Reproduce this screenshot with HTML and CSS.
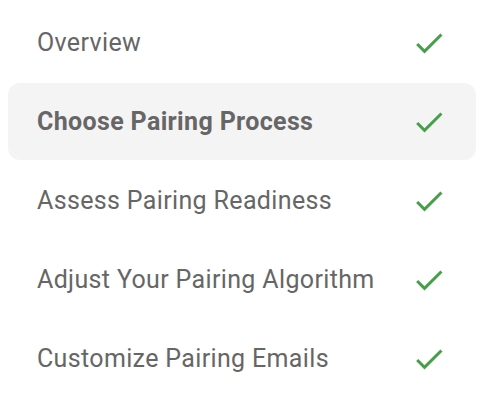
FILE: index.html
```html
<!DOCTYPE html>
<html lang="en">
<head>
  <meta charset="UTF-8">
  <meta name="viewport" content="width=device-width, initial-scale=1.0">
  <title>Pairing Setup</title>
  <link rel="stylesheet" href="styles.css">
</head>
<body>
  <!-- Setup steps -->
  <ul class="steps">
    <li class="step">
      <span class="step-label">Overview</span>
      <svg class="check" viewBox="0 0 24 24"><path d="M9 16.17L4.83 12l-1.42 1.41L9 19 21 7l-1.41-1.41z"/></svg>
    </li>
    <li class="step active">
      <span class="step-label">Choose Pairing Process</span>
      <svg class="check" viewBox="0 0 24 24"><path d="M9 16.17L4.83 12l-1.42 1.41L9 19 21 7l-1.41-1.41z"/></svg>
    </li>
    <li class="step">
      <span class="step-label">Assess Pairing Readiness</span>
      <svg class="check" viewBox="0 0 24 24"><path d="M9 16.17L4.83 12l-1.42 1.41L9 19 21 7l-1.41-1.41z"/></svg>
    </li>
    <li class="step">
      <span class="step-label">Adjust Your Pairing Algorithm</span>
      <svg class="check" viewBox="0 0 24 24"><path d="M9 16.17L4.83 12l-1.42 1.41L9 19 21 7l-1.41-1.41z"/></svg>
    </li>
    <li class="step">
      <span class="step-label">Customize Pairing Emails</span>
      <svg class="check" viewBox="0 0 24 24"><path d="M9 16.17L4.83 12l-1.42 1.41L9 19 21 7l-1.41-1.41z"/></svg>
    </li>
  </ul>
</body>
</html>
```

FILE: styles.css
```css
body {
  margin: 0;
  padding: 0;
  background: #fff;
  font-family: Roboto, 'Noto Sans', sans-serif;
}
.steps {
  list-style: none;
  margin: 0;
  padding: 4px 12px 0 8px;
  display: flex;
  flex-direction: column;
  gap: 2px;
}
.step {
  display: flex;
  align-items: center;
  justify-content: space-between;
  height: 77px;
  padding: 0 29px;
  border-radius: 12px;
  color: #666;
  font-size: 25px;
  letter-spacing: 0.35px;
}
.step.active {
  background: #f4f4f4;
  font-weight: 700;
}
.check {
  width: 36px;
  height: 36px;
  fill: #43a047;
  flex-shrink: 0;
}
```
